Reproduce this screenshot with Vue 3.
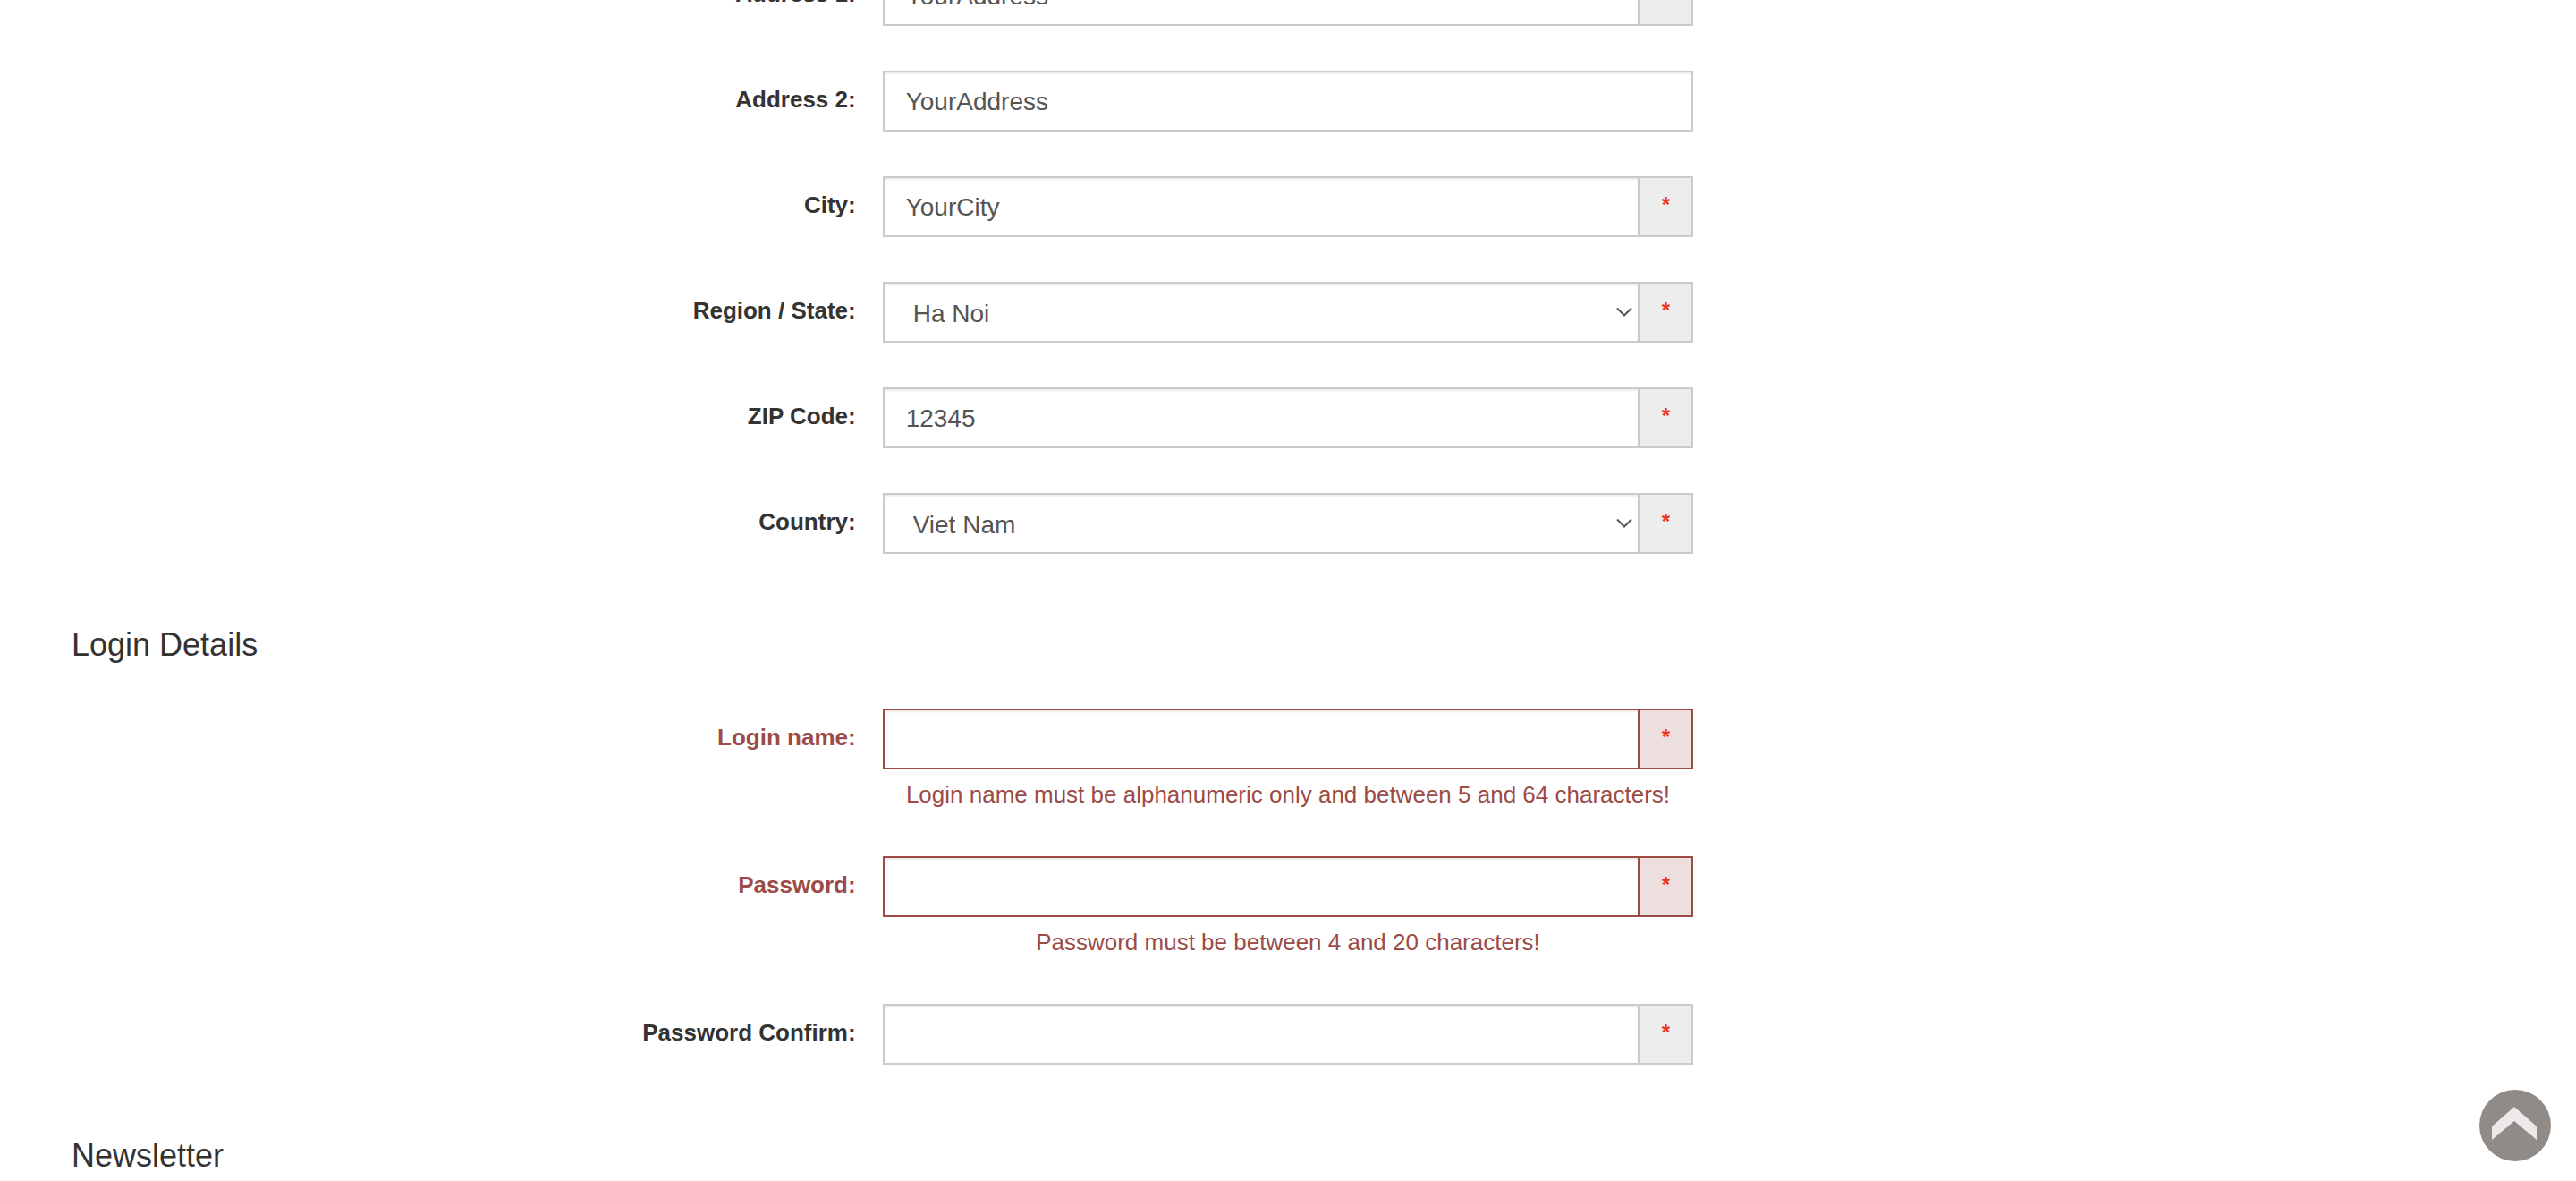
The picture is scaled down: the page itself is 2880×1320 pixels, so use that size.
<script setup>
import { reactive } from 'vue'

const addressFields = reactive([
  { id: 'address-1', label: 'Address 1:', type: 'text', value: 'YourAddress', required: true },
  { id: 'address-2', label: 'Address 2:', type: 'text', value: 'YourAddress', required: false },
  { id: 'city', label: 'City:', type: 'text', value: 'YourCity', required: true },
  { id: 'region', label: 'Region / State:', type: 'select', value: 'Ha Noi', options: ['Ha Noi'], required: true },
  { id: 'zip', label: 'ZIP Code:', type: 'text', value: '12345', required: true },
  { id: 'country', label: 'Country:', type: 'select', value: 'Viet Nam', options: ['Viet Nam'], required: true },
])

const loginFields = reactive([
  {
    id: 'login-name',
    label: 'Login name:',
    type: 'text',
    value: '',
    required: true,
    error: 'Login name must be alphanumeric only and between 5 and 64 characters!',
  },
  {
    id: 'password',
    label: 'Password:',
    type: 'password',
    value: '',
    required: true,
    error: 'Password must be between 4 and 20 characters!',
  },
  { id: 'password-confirm', label: 'Password Confirm:', type: 'password', value: '', required: true },
])

const sections = [
  { title: '', fields: addressFields },
  { title: 'Login Details', fields: loginFields },
  { title: 'Newsletter', fields: [] },
]

function scrollToTop() {
  window.scrollTo({ top: 0, behavior: 'smooth' })
}
</script>

<template>
  <main class="page">
    <form class="form" @submit.prevent>
      <section v-for="section in sections" :key="section.title" class="section">
        <h4 v-if="section.title" class="heading">{{ section.title }}</h4>
        <div v-if="section.fields.length" class="fields">
          <div
            v-for="field in section.fields"
            :key="field.id"
            class="row"
            :class="{ 'has-error': field.error }"
          >
            <label class="label" :for="field.id">{{ field.label }}</label>
            <div class="cell">
              <div class="group">
                <div v-if="field.type === 'select'" class="select-wrap">
                  <select :id="field.id" v-model="field.value" class="control select">
                    <option v-for="option in field.options" :key="option">{{ option }}</option>
                  </select>
                  <svg class="chevron" viewBox="0 0 18 12" aria-hidden="true">
                    <path d="M1 1.5 9 9.5 17 1.5" fill="none" stroke="#555" stroke-width="2" />
                  </svg>
                </div>
                <input
                  v-else
                  :id="field.id"
                  v-model="field.value"
                  class="control"
                  :type="field.type"
                  autocomplete="off"
                />
                <span v-if="field.required" class="addon">*</span>
              </div>
              <p v-if="field.error" class="help">{{ field.error }}</p>
            </div>
          </div>
        </div>
      </section>
    </form>
    <button class="to-top" type="button" aria-label="Back to top" @click="scrollToTop">
      <svg viewBox="0 0 80 80" aria-hidden="true">
        <circle cx="40" cy="40" r="40" fill="#918b87" />
        <path d="M39 19 64 41V56L39 35 14 56V41Z" fill="#ebe9e9" />
      </svg>
    </button>
  </main>
</template>

<style>
body {
  background: #fff;
}
</style>

<style scoped>
.page {
  overflow: hidden;
  padding: 0 80px;
  color: #333;
  font-family: "Liberation Sans", Arial, sans-serif;
  font-size: 26px;
  line-height: 37px;
}

.form {
  margin-top: -39px;
}

.heading {
  margin: 0;
  font-size: 36px;
  font-weight: 400;
  line-height: 40px;
}

.fields {
  display: flex;
  flex-direction: column;
  gap: 50px;
  padding-bottom: 82px;
}

.heading + .fields {
  padding-top: 51px;
}

.row {
  display: grid;
  grid-template-columns: repeat(3, 1fr);
  align-items: start;
}

.label {
  padding: 14px 30px 0 0;
  font-weight: 700;
  text-align: right;
}

.group {
  display: flex;
  height: 68px;
}

.select-wrap {
  position: relative;
  display: flex;
  flex: 1;
  min-width: 0;
}

.control {
  box-sizing: border-box;
  flex: 1;
  min-width: 0;
  height: 68px;
  margin: 0;
  padding: 2px 24px 0;
  border: 2px solid #cbcbcb;
  border-radius: 0;
  outline: none;
  background: #fff;
  box-shadow: inset 0 2px 2px rgba(0, 0, 0, 0.075);
  color: #555;
  font-family: inherit;
  font-size: 28px;
}

.select {
  padding: 2px 32px 0;
  appearance: none;
}

.chevron {
  position: absolute;
  top: 28px;
  right: 8px;
  width: 18px;
  height: 12px;
  pointer-events: none;
}

.addon {
  box-sizing: border-box;
  display: flex;
  flex: 0 0 60px;
  align-items: center;
  justify-content: center;
  padding-bottom: 4px;
  border: 2px solid #cbcbcb;
  border-left: 0;
  background: #ededed;
  color: #ea3323;
  font-size: 24px;
  font-weight: 700;
  line-height: 24px;
}

.help {
  margin: 0;
  padding-top: 10px;
  text-align: center;
}

.has-error .label,
.has-error .help {
  color: #9c4b46;
}

.has-error .control,
.has-error .addon {
  border-color: #9c4b46;
}

.has-error .addon {
  background: #eedfdf;
}

.to-top {
  position: fixed;
  right: 28px;
  bottom: 22px;
  width: 80px;
  height: 80px;
  padding: 0;
  border: 0;
  border-radius: 50%;
  background: none;
  cursor: pointer;
}

.to-top svg {
  display: block;
  width: 100%;
  height: 100%;
}
</style>
